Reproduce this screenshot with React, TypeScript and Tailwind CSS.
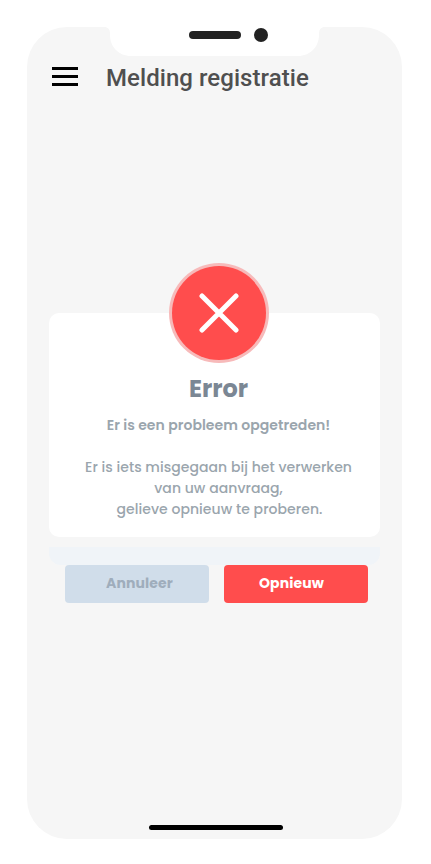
import React from "react";

function Notch() {
  return (
    <div className="flex h-[29px] pl-[77px]">
      <div className="relative h-[29px] w-[221px]">
        <svg className="absolute inset-0" width="221" height="29" viewBox="0 0 221 29" aria-hidden="true">
          <path
            d="M0 0C4 0 6 2.500 6 6.500V8C6 20 15 29 27 29H194C206 29 215 20 215 8V6.500C215 2.500 217 0 221 0Z"
            fill="#ffffff"
          />
        </svg>
        <div className="relative flex items-center gap-[13px] pl-[85px] pt-px">
          <div className="h-2 w-[52px] rounded-full bg-[#222222]" />
          <div className="size-[14px] rounded-full bg-[#222222]" />
        </div>
      </div>
    </div>
  );
}

function Header() {
  return (
    <header className="flex h-11 items-center pl-[25px]">
      <button type="button" aria-label="Menu" className="-mt-[3px] flex w-[26px] flex-col gap-[5px]">
        <span className="h-[3px] bg-black" />
        <span className="h-[3px] bg-black" />
        <span className="h-[3px] bg-black" />
      </button>
      <h1 className="ml-7 whitespace-nowrap font-['Roboto',sans-serif] text-2xl font-medium tracking-[0.06px] text-[#4f4f4f]">
        Melding registratie
      </h1>
    </header>
  );
}

function ErrorBadge() {
  return (
    <div className="ml-[9px] -mt-[50px] flex size-[100px] items-center justify-center rounded-full bg-[#f7baba]">
      <div className="flex size-[94px] items-center justify-center rounded-full bg-[#ff4d4d]">
        <svg width="40" height="40" viewBox="0 0 40 40" aria-hidden="true">
          <path d="M3 3L37 37M37 3L3 37" stroke="#ffffff" strokeWidth="5" strokeLinecap="round" />
        </svg>
      </div>
    </div>
  );
}

export default function App() {
  return (
    <div className="h-[864px] w-[431px] overflow-hidden bg-white pl-[27px] pt-[27px] font-['Poppins','Inter',sans-serif]">
      <main className="flex h-[812px] w-[375px] flex-col rounded-[40px] bg-[#f6f6f6]">
        <Notch />
        <Header />
        <section className="ml-[22px] mt-[213px] flex h-[224px] w-[331px] flex-col items-center rounded-[10px] bg-white">
          <ErrorBadge />
          <h2 className="ml-2 mt-2 text-2xl leading-9 font-bold text-[#7b8794]">Error</h2>
          <p className="ml-2 mt-2 whitespace-nowrap text-sm leading-[21px] font-semibold tracking-[0.04px] text-[#9aa5ad]">
            Er is een probleem opgetreden!
          </p>
          <p className="ml-2 mt-[21px] whitespace-nowrap text-center text-sm leading-[21px] font-medium tracking-[0.05px] text-[#9aa5ad]">
            Er is iets misgegaan bij het verwerken
            <br />
            van uw aanvraag,
            <br />
            <span className="pl-[2px]">gelieve opnieuw te proberen.</span>
          </p>
        </section>
        <div className="ml-[22px] mt-[10px] h-[18px] w-[331px] rounded-b-[12px] bg-[#f0f4f8]" />
        <div className="flex gap-[15px] pl-[38px]">
          <button
            type="button"
            className="h-[38px] w-36 rounded bg-[#d0ddea] pb-[2px] pl-[5px] text-sm font-bold tracking-[0.1px] text-[#9fadbc]"
          >
            Annuleer
          </button>
          <button
            type="button"
            className="h-[38px] w-36 rounded bg-[#ff4d4d] pb-[2px] pr-[9px] text-sm font-bold tracking-[0.1px] text-white"
          >
            Opnieuw
          </button>
        </div>
        <div className="mb-[9px] ml-[122px] mt-auto h-[5px] w-[134px] rounded-full bg-black" />
      </main>
    </div>
  );
}
